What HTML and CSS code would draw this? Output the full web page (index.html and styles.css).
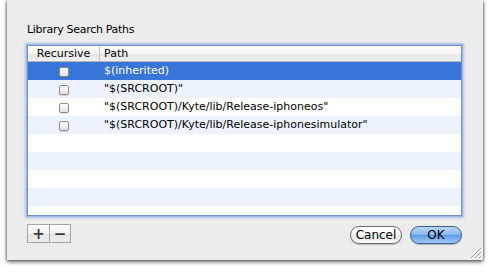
FILE: index.html
```html
<!DOCTYPE html>
<html lang="en">
<head>
    <meta charset="UTF-8">
    <title>Library Search Paths</title>
    <link rel="stylesheet" href="styles.css">
</head>
<body>

    <div class="sheet">
        <h2 class="sheet-title">Library Search Paths</h2>

        <!-- Paths table -->
        <div class="table-box">
            <div class="table-head">
                <div class="col-rec">Recursive</div>
                <div class="col-path">Path</div>
            </div>
            <div class="row selected">
                <div class="col-rec"><span class="check"></span></div>
                <div class="col-path">$(inherited)</div>
            </div>
            <div class="row alt">
                <div class="col-rec"><span class="check"></span></div>
                <div class="col-path">"$(SRCROOT)"</div>
            </div>
            <div class="row">
                <div class="col-rec"><span class="check"></span></div>
                <div class="col-path">"$(SRCROOT)/Kyte/lib/Release-iphoneos"</div>
            </div>
            <div class="row alt">
                <div class="col-rec"><span class="check"></span></div>
                <div class="col-path">"$(SRCROOT)/Kyte/lib/Release-iphonesimulator"</div>
            </div>
            <div class="row"></div>
            <div class="row alt"></div>
            <div class="row"></div>
            <div class="row alt"></div>
            <div class="row last"></div>
        </div>

        <div class="sheet-footer">
            <div class="add-remove">
                <button type="button" class="small-btn">+</button>
                <button type="button" class="small-btn">&minus;</button>
            </div>
            <div class="actions">
                <button type="button" class="btn cancel-btn">Cancel</button>
                <button type="button" class="btn ok-btn">OK</button>
            </div>
        </div>

        <svg class="grip" width="11" height="11" viewBox="0 0 11 11">
            <path d="M1 11 L11 1 M5 11 L11 5 M9 11 L11 9" stroke="#9a9a9a" stroke-width="1"/>
            <path d="M2 11 L11 2 M6 11 L11 6 M10 11 L11 10" stroke="#ffffff" stroke-width="1"/>
        </svg>
    </div>

</body>
</html>
```

FILE: styles.css
```css
/* General Styles */
* {
    margin: 0;
    padding: 0;
    box-sizing: border-box;
    font-family: 'DejaVu Sans', sans-serif;
}

body {
    background-color: #fff;
    width: 490px;
    height: 272px;
    overflow: hidden;
    color: #000;
}

.sheet {
    position: relative;
    margin-left: 7px;
    width: 476px;
    height: 260px;
    background-color: #ececec;
    padding: 23px 21px 0 20px;
    box-shadow: 0 2px 4px rgba(0, 0, 0, 0.6), -1px 0 2px rgba(0, 0, 0, 0.25), 1px 0 2px rgba(0, 0, 0, 0.25);
}

.sheet-title {
    font-size: 11px;
    font-weight: normal;
    letter-spacing: -0.3px;
    line-height: 14px;
    height: 14px;
    margin-bottom: 8px;
}

/* Table */
.table-box {
    height: 171px;
    background-color: #fff;
    border: 1px solid #6f94c9;
    box-shadow: 0 0 0 1px #9bbbe6, 0 0 2px 2px rgba(120, 160, 220, 0.55);
    overflow: hidden;
}

.table-head,
.row {
    display: grid;
    grid-template-columns: 72px 1fr;
    font-size: 11px;
}

.table-head {
    height: 16px;
    line-height: 15px;
    background: linear-gradient(#ffffff, #f4f4f4 50%, #e6e6e6 51%, #f0f0f0);
    border-bottom: 1px solid #b5b5b5;
}

.table-head .col-rec {
    text-align: center;
    border-right: 1px solid #c4c4c4;
}

.table-head .col-path {
    padding-left: 4px;
}

.row {
    height: 18px;
    line-height: 18px;
}

.row.last {
    height: 9px;
}

.row.alt {
    background-color: #edf3fe;
}

.row.selected {
    background-color: #3875d7;
    color: #fff;
}

.row .col-rec {
    display: flex;
    justify-content: center;
    align-items: center;
}

.row .col-path {
    padding-left: 4px;
    white-space: nowrap;
}

.check {
    display: block;
    width: 10px;
    height: 10px;
    margin-top: 2px;
    margin-left: -1px;
    border: 1px solid #8c8c8c;
    border-radius: 2px;
    background: linear-gradient(#ffffff, #f2f2f2 50%, #e2e2e2);
    box-shadow: 0 1px 1px rgba(0, 0, 0, 0.15);
}

/* Footer */
.sheet-footer {
    display: flex;
    justify-content: space-between;
    margin-top: 8px;
}

.add-remove {
    display: flex;
    border: 1px solid #a6a6a6;
    height: 19px;
}

.small-btn {
    width: 21px;
    height: 17px;
    border: none;
    background: linear-gradient(#fbfbfb, #f1f1f1 50%, #e4e4e4 51%, #ececec);
    font-size: 15px;
    font-weight: bold;
    line-height: 16px;
    color: #3c3c3c;
}

.small-btn + .small-btn {
    border-left: 1px solid #a6a6a6;
}

.actions {
    display: flex;
    gap: 8px;
    margin-top: 2px;
}

.btn {
    width: 52px;
    height: 18px;
    border-radius: 9px;
    font-size: 12px;
    line-height: 15px;
    color: #000;
}

.cancel-btn {
    border: 1px solid #6b6b6b;
    background: linear-gradient(#ffffff, #f6f6f6 50%, #e8e8e8 51%, #fafafa);
    box-shadow: 0 1px 1px rgba(0, 0, 0, 0.2);
}

.ok-btn {
    border: 1px solid #3a5e93;
    background: linear-gradient(#b9d6f7, #8fbcef 45%, #5f9ae6 52%, #9fcaf9);
    box-shadow: 0 1px 1px rgba(0, 0, 0, 0.25);
}

.grip {
    position: absolute;
    right: 2px;
    bottom: 2px;
}
```
